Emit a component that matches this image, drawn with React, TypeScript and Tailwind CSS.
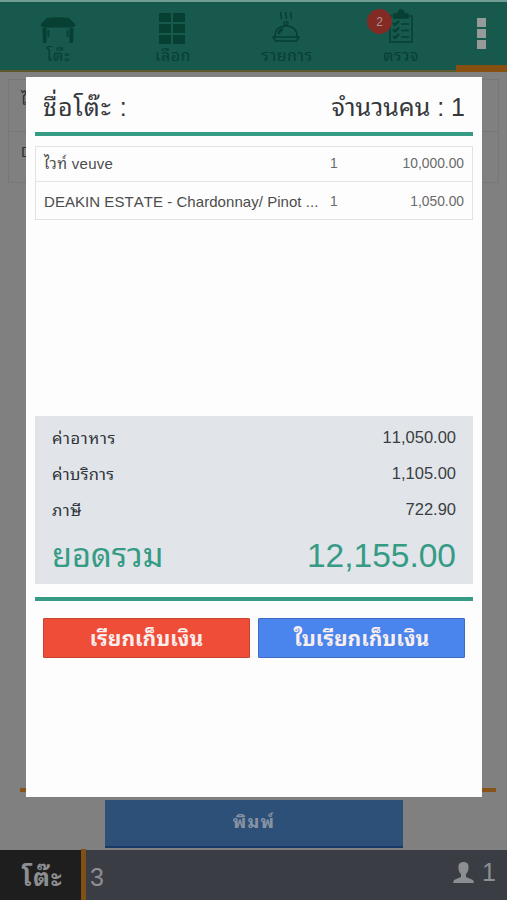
import type { ReactNode } from "react";

function Tab({ label, labelClass, children }: { label: string; labelClass: string; children: ReactNode }) {
  return (
    <div className="flex w-[114px] flex-col items-center pt-[8px] text-[#073f33]">
      <div className="flex h-[36px] items-center justify-center">{children}</div>
      <span className={"whitespace-nowrap leading-5 " + labelClass}>{label}</span>
    </div>
  );
}

function TableIcon() {
  return (
    <svg className="ml-0.5 mt-1" width="36" height="27" viewBox="0 0 36 27" fill="currentColor">
      <path d="M7 1Q18-.5 29 1l6 6q1 3-3 3.500H4Q0 10 1 7z" />
      <path d="M2.500 11h4v15h-3.500zM29.500 11h4L33 26h-3.500zM7.500 13h1.800v7H7.500zM26.700 13h1.800v7h-1.800z" />
    </svg>
  );
}

function GridIcon() {
  return (
    <svg className="ml-0.5" width="28" height="31" viewBox="0 0 28 31" fill="currentColor">
      <path d="M1 0h12v9H1zM15 0h12v9H15zM1 11h12v9H1zM15 11h12v9H15zM1 22h12v9H1zM15 22h12v9H15z" />
    </svg>
  );
}

function DishIcon() {
  return (
    <svg className="ml-0.5 -mt-0.5" width="28" height="32" viewBox="0 0 28 32" fill="none" stroke="currentColor" strokeWidth="1.500">
      <path d="M9 1q-1 2 0 3.500T9 8M14 1q-1 2 0 3.500T14 8M19 1q-1 2 0 3.500T19 8" />
      <circle cx="14" cy="12.500" r="1.800" />
      <path d="M3 26q0-11 11-11t11 11" />
      <path d="M6.500 23q1-4 4.500-5" strokeWidth="2.500" />
      <path d="M1 26h26l-2.500 4h-21z" />
    </svg>
  );
}

function ClipboardIcon() {
  return (
    <svg className="-mt-1 ml-1" width="24" height="34" viewBox="0 0 24 34" fill="none" stroke="currentColor" strokeWidth="1.500">
      <path d="M4 7H1v26h22V7h-3" />
      <path d="M5 9V5h4q0-4 3-4t3 4h4v4z" fill="currentColor" />
      <path d="M4 14l2 2 4-4M4 20.500l2 2 4-4M4 27l2 2 4-4" strokeWidth="2" />
      <path d="M12 15h8M12 21.500h8M12 28h8" />
    </svg>
  );
}

function Summary({ label, labelClass, value }: { label: string; labelClass: string; value: string }) {
  return (
    <div className="flex h-9 items-center justify-between text-[16.500px] text-[#3a3e43]">
      <span className={"pt-0.5 text-[16.500px] text-[#30343a] " + labelClass}>{label}</span>
      <span>{value}</span>
    </div>
  );
}

function OrderRow({ name, nameClass, qty, price }: { name: string; nameClass: string; qty: string; price: string }) {
  return (
    <div className="flex items-center px-2 text-[13.800px]">
      <span className={"w-[286px] whitespace-nowrap text-[15px] text-[#4c4c4c] " + nameClass}>{name}</span>
      <span className="text-[#6a6a6a]">{qty}</span>
      <span className="ml-auto text-[#6a6a6a]">{price}</span>
    </div>
  );
}

export default function App() {
  return (
    <div className="relative flex h-[900px] w-[507px] flex-col overflow-hidden bg-[#808080] font-['Liberation_Sans','Noto_Sans_Thai_Looped','Droid_Sans_Thai','Loma','Noto_Sans_Thai','Noto_Sans',sans-serif] [font-kerning:none]">
      <header className="flex h-[72px] shrink-0 border-t-2 border-b-2 border-t-[#719c94] border-b-[#5c592d] bg-[#17594c]">
        <Tab label="โต๊ะ" labelClass="ml-1 text-[16px] tracking-[1px]"><TableIcon /></Tab>
        <Tab label="เลือก" labelClass="ml-1 text-[16px] tracking-[0.600px]"><GridIcon /></Tab>
        <Tab label="รายการ" labelClass="ml-1 text-[16px] tracking-[0.500px]"><DishIcon /></Tab>
        <Tab label="ตรวจ" labelClass="ml-1 text-[16px] tracking-[0.300px]">
          <div className="relative">
            <ClipboardIcon />
            <span className="absolute -left-[18px] -top-[4px] flex size-[25px] items-center justify-center rounded-full bg-[#842a25] text-[12px] text-[#a99694]">2</span>
          </div>
        </Tab>
        <div className="-mb-0.5 flex h-[70px] flex-1 flex-col items-center gap-0.5 border-b-[7px] border-[#885010] pt-4">
          <i className="size-[9px] bg-[#969b99]" />
          <i className="size-[9px] bg-[#969b99]" />
          <i className="size-[9px] bg-[#969b99]" />
        </div>
      </header>

      <main className="flex flex-1 flex-col px-2 pt-[7px]">
        <section className="flex h-[104px] w-[491px] flex-col border border-[#777777] text-[15px] text-[#303030]">
          <div className="h-[52px] border-b border-[#777777] pl-3 pt-[9px]">ไ</div>
          <div className="pl-3 pt-[9px]">D</div>
        </section>
        <div className="ml-3 mt-auto h-1 w-[476px] bg-[#875319]" />
        <button className="ml-[97px] mb-[2px] mt-[8px] flex h-[48px] w-[298px] items-center justify-center border-b-2 border-[#183966] bg-[#2d5078] pb-px text-[18px] font-bold tracking-[1.200px] text-[#8792a3]">พิมพ์</button>
      </main>

      <footer className="flex h-[50px] shrink-0 bg-[#3a3d44] text-[25px] text-[#8c8e92]">
        <div className="flex w-[81px] items-center justify-center bg-[#1e1e1e] pl-1 pt-1.5 text-[25px] font-bold tracking-[1.200px]">โต๊ะ</div>
        <div className="-mt-px w-[5px] bg-[#805017]" />
        <span className="ml-[4px] mt-[9px] leading-9">3</span>
        <div className="ml-auto flex items-start gap-2 pr-[11px] pt-[4px]">
          <svg className="mt-[8px]" width="21" height="21" viewBox="0 0 21 21" fill="currentColor">
            <path d="M10.500 0C7 0 5 2 5.500 6c.2 3 1 5 2.500 6v3l-7 3-1 3h21l-1-3-7-3v-3c1.500-1 2.300-3 2.500-6C16 2 14 0 10.500 0z" />
          </svg>
          <span className="leading-9">1</span>
        </div>
      </footer>

      <section className="absolute left-[26px] top-[77px] flex h-[720px] w-[456px] flex-col bg-[#fdfdfd] px-[9px]">
        <div className="flex h-[59px] w-[438px] shrink-0 items-center justify-between border-b-4 border-[#359b85] px-2 pt-1.5 text-[25px] text-[#35383b]">
          <span className="whitespace-nowrap tracking-[1px]">ชื่อโต๊ะ :</span>
          <span className="whitespace-nowrap">จำนวนคน : 1</span>
        </div>
        <div className="mt-[10px] grid h-[74px] w-[438px] shrink-0 grid-rows-[35px_37px] divide-y divide-[#e5e5e5] border border-[#e2e2e2]">
          <OrderRow name="ไวท์ veuve" nameClass="tracking-[0.300px]" qty="1" price="10,000.00" />
          <div className="grid pt-1">
            <OrderRow name="DEAKIN ESTATE - Chardonnay/ Pinot ..." nameClass="tracking-[0.050px]" qty="1" price="1,050.00" />
          </div>
        </div>
        <div className="mt-[196px] h-[168px] w-[438px] shrink-0 bg-[#e1e5e9] px-[17px] pt-[3px]">
          <Summary label="ค่าอาหาร" labelClass="tracking-[0.600px]" value="11,050.00" />
          <Summary label="ค่าบริการ" labelClass="tracking-[0.200px]" value="1,105.00" />
          <Summary label="ภาษี" labelClass="tracking-[0.500px]" value="722.90" />
          <div className="flex h-[56px] items-center justify-between pt-0.5 text-[33.500px] text-[#359b85]">
            <span className="text-[32.500px]">ยอดรวม</span>
            <span>12,155.00</span>
          </div>
        </div>
        <div className="mt-[13px] h-1 w-[438px] shrink-0 bg-[#359b85]" />
        <div className="mt-[17px] flex gap-2 pl-2 font-bold text-[#f9eeee]">
          <button className="h-[40px] w-[207px] rounded-[1px] border border-[#c44331] bg-[#ef4d38] pt-0.5 text-[21px]">เรียกเก็บเงิน</button>
          <button className="h-[40px] w-[207px] rounded-[1px] border border-[#3d6bbd] bg-[#4985ed] pt-0.5 text-[21px]">ใบเรียกเก็บเงิน</button>
        </div>
      </section>
    </div>
  );
}
